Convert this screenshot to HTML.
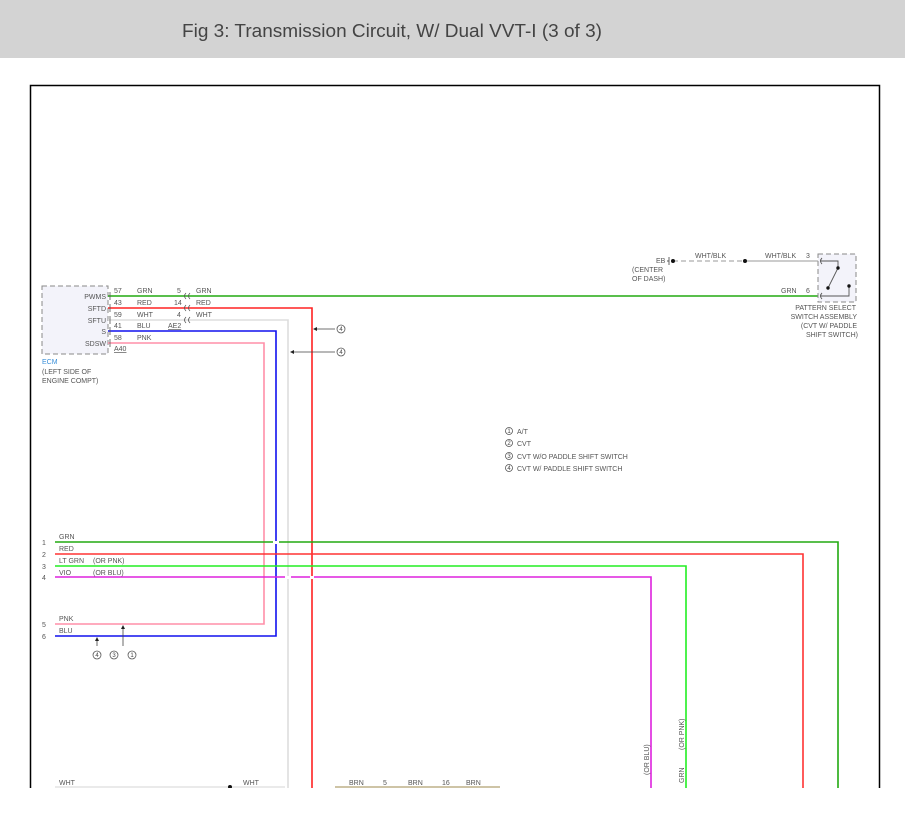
<!DOCTYPE html>
<html><head><meta charset="utf-8"><style>
html,body{margin:0;padding:0;background:#fff;}
svg{display:block}
text{font-family:"Liberation Sans",sans-serif;}
</style></head><body>
<svg width="905" height="817" viewBox="0 0 905 817" xmlns="http://www.w3.org/2000/svg">
<rect x="0" y="0" width="905" height="58" fill="#d3d3d3"/>
<text x="182" y="37" font-size="18" fill="#444" textLength="420" lengthAdjust="spacingAndGlyphs">Fig 3: Transmission Circuit, W/ Dual VVT-I (3 of 3)</text>
<!-- frame -->
<path d="M30.5 788 V85.5 H879.5 V788" fill="none" stroke="#000" stroke-width="1.5"/>
<g font-size="7" fill="#555">
<!-- ECM -->
<rect x="42" y="286" width="66" height="68" fill="#f3f3fa" stroke="#888" stroke-dasharray="5,3"/>
<text x="106" y="299" text-anchor="end">PWMS</text>
<text x="106" y="311" text-anchor="end">SFTD</text>
<text x="106" y="323" text-anchor="end">SFTU</text>
<text x="106" y="334" text-anchor="end">S</text>
<text x="106" y="346" text-anchor="end">SDSW</text>
<text x="42" y="364" fill="#3a8fd8">ECM</text>
<text x="42" y="374">(LEFT SIDE OF</text>
<text x="42" y="383">ENGINE COMPT)</text>
<text x="114" y="293">57</text><text x="137" y="293">GRN</text><text x="177" y="293">5</text><text x="196" y="293">GRN</text>
<text x="114" y="305">43</text><text x="137" y="305">RED</text><text x="174" y="305">14</text><text x="196" y="305">RED</text>
<text x="114" y="317">59</text><text x="137" y="317">WHT</text><text x="177" y="317">4</text><text x="196" y="317">WHT</text>
<text x="114" y="328">41</text><text x="137" y="328">BLU</text><text x="168" y="328" text-decoration="underline">AE2</text>
<text x="114" y="340">58</text><text x="137" y="340">PNK</text>
<text x="114" y="351" text-decoration="underline">A40</text>
</g>
<g fill="none" stroke-width="1.6">
<path d="M108 296 H820" stroke="#22aa11"/>
<path d="M108 308 H312 V788" stroke="#ff2222"/>
<path d="M108 320 H288 V788" stroke="#dddddd"/>
<path d="M108 331 H276 V636 H55" stroke="#1111ee"/>
<path d="M108 343 H264 V624 H55" stroke="#ff8fa8"/>
<path d="M55 542 H838 V788" stroke="#22aa11"/>
<path d="M55 554 H803 V788" stroke="#ff3333"/>
<path d="M55 566 H686 V788" stroke="#22ee22"/>
<path d="M55 577 H651 V788" stroke="#dd22dd"/>
<path d="M335 787 H500" stroke="#b0a070" stroke-width="1.2"/>
<path d="M55 787 H285" stroke="#dddddd" stroke-width="1.2"/>
</g>
<!-- gaps at crossings -->
<rect x="273" y="541" width="6" height="3" fill="#fff"/>
<rect x="310" y="576" width="4" height="3" fill="#fff"/>
<rect x="285" y="576" width="6" height="3" fill="#fff"/>
<!-- connectors -->
<g fill="none" stroke="#555" stroke-width="0.8">
<path d="M186 293 q-3 3 0 6 M190 293 q-3 3 0 6 M186 305 q-3 3 0 6 M190 305 q-3 3 0 6 M186 317 q-3 3 0 6 M190 317 q-3 3 0 6"/>
<path d="M110 292 v8 M110 304 v8 M110 316 v8 M110 327 v8 M110 339 v8"/>
<path d="M335 329 H316 M335 352 H292" stroke="#444"/>
<path d="M97 646 V639 M123 646 V627" stroke="#444"/>
<circle cx="341" cy="329" r="4"/><circle cx="341" cy="352" r="4"/>
<circle cx="97" cy="655" r="4"/><circle cx="114" cy="655" r="4"/><circle cx="132" cy="655" r="4"/>
<circle cx="509" cy="431" r="3.5"/><circle cx="509" cy="443" r="3.5"/><circle cx="509" cy="456" r="3.5"/><circle cx="509" cy="468" r="3.5"/>
</g>
<g fill="#222"><path d="M313 329 l4 -2 v4z M290 352 l4 -2 v4z M97 637 l-2 4 h4z M123 625 l-2 4 h4z"/></g>
<g font-size="6" fill="#444" text-anchor="middle">
<text x="341" y="331">4</text><text x="341" y="354">4</text>
<text x="97" y="657">4</text><text x="114" y="657">3</text><text x="132" y="657">1</text>
<text x="509" y="433">1</text><text x="509" y="445">2</text><text x="509" y="458">3</text><text x="509" y="470">4</text>
</g>
<g font-size="7" fill="#555">
<text x="517" y="434">A/T</text>
<text x="517" y="446">CVT</text>
<text x="517" y="459">CVT W/O PADDLE SHIFT SWITCH</text>
<text x="517" y="471">CVT W/ PADDLE SHIFT SWITCH</text>
<text x="42" y="545">1</text><text x="59" y="539">GRN</text>
<text x="42" y="557">2</text><text x="59" y="551">RED</text>
<text x="42" y="569">3</text><text x="59" y="563">LT GRN</text><text x="93" y="563">(OR PNK)</text>
<text x="42" y="580">4</text><text x="59" y="575">VIO</text><text x="93" y="575">(OR BLU)</text>
<text x="42" y="627">5</text><text x="59" y="621">PNK</text>
<text x="42" y="639">6</text><text x="59" y="633">BLU</text>
<text x="59" y="785">WHT</text><text x="243" y="785">WHT</text>
<text x="349" y="785">BRN</text><text x="383" y="785">5</text><text x="408" y="785">BRN</text><text x="442" y="785">16</text><text x="466" y="785">BRN</text>
<text transform="translate(649,775) rotate(-90)">(OR BLU)</text>
<text transform="translate(684,750) rotate(-90)">(OR PNK)</text>
<text transform="translate(684,783) rotate(-90)">GRN</text>
<!-- right -->
<text x="656" y="263">EB</text>
<text x="632" y="272">(CENTER</text>
<text x="632" y="281">OF DASH)</text>
<text x="695" y="258">WHT/BLK</text>
<text x="765" y="258">WHT/BLK</text><text x="806" y="258">3</text>
<text x="781" y="293">GRN</text><text x="806" y="293">6</text>
<text x="856" y="310" text-anchor="end">PATTERN SELECT</text>
<text x="857" y="319" text-anchor="end">SWITCH ASSEMBLY</text>
<text x="857" y="328" text-anchor="end">(CVT W/ PADDLE</text>
<text x="858" y="337" text-anchor="end">SHIFT SWITCH)</text>
</g>
<rect x="818" y="254" width="38" height="48" fill="#f3f3fa" stroke="#888" stroke-dasharray="5,3"/>
<g fill="none" stroke="#555" stroke-width="0.9">
<path d="M673 261 H745" stroke-dasharray="5,3" stroke="#999"/>
<path d="M745 261 H818" stroke="#999"/>
<path d="M669 257 v8 M667 261 h2"/>
<path d="M820 261 H838 V268 L828 288 M849 286 V296 H820"/>
<path d="M822 258 q-3 3 0 6 M822 293 q-3 3 0 6"/>
</g>
<g fill="#111"><circle cx="673" cy="261" r="2"/><circle cx="745" cy="261" r="2"/><circle cx="838" cy="268" r="1.7"/><circle cx="828" cy="288" r="1.7"/><circle cx="849" cy="286" r="1.7"/><circle cx="230" cy="787" r="2"/></g>
<rect x="0" y="788" width="905" height="29" fill="#fff"/>
</svg>
</body></html>
